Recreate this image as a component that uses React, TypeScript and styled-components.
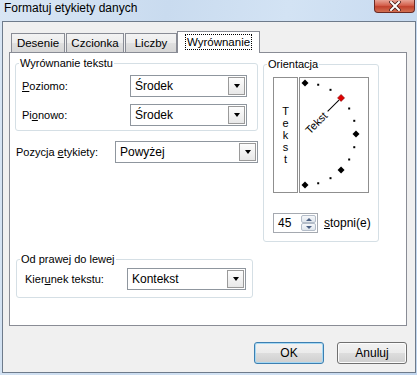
import styled, { createGlobalStyle } from 'styled-components'

const GlobalStyle = createGlobalStyle`
  html, body {
    margin: 0;
    padding: 0;
  }
  body {
    width: 417px;
    height: 375px;
    overflow: hidden;
    font-family: "Liberation Sans", Arial, sans-serif;
    font-size: 11px;
    color: #000;
  }
`

// Window chrome
const Window = styled.div`
  width: 417px;
  height: 375px;
  box-sizing: border-box;
  display: flex;
  flex-direction: column;
  padding: 0 1px 2px 2px;
  background: linear-gradient(100deg, #d9e6f4 0%, #c9dbef 35%, #d3e3f4 60%, #c2d6ee 100%);
`

const TitleBar = styled.div`
  height: 21px;
  display: flex;
  justify-content: space-between;
  align-items: flex-start;
`

const Title = styled.span`
  font-size: 12px;
  line-height: 15px;
  padding: 1px 0 0 2px;
`

const CloseButton = styled.div`
  width: 41px;
  height: 13px;
  margin-right: 1px;
  box-sizing: border-box;
  border: 1px solid #6b2a24;
  border-top: none;
  border-radius: 0 0 4px 4px;
  background: linear-gradient(180deg, #e8a395 0%, #d4604c 45%, #c1412d 55%, #d27052 100%);
  display: flex;
  align-items: center;
  justify-content: center;
`

const Client = styled.div`
  flex: 1;
  background: #f0f0f0;
  border: 1px solid #6e7b8b;
  display: flex;
  flex-direction: column;
  padding: 9px 7px 0 6px;
`

// Tabs
const TabStrip = styled.div`
  display: flex;
  align-items: flex-end;
  height: 22px;
  margin: 0 0 -1px 2px;
  position: relative;
  z-index: 1;
`

const Tab = styled.div<{ $active?: boolean; $width: number }>`
  box-sizing: border-box;
  width: ${(p) => p.$width}px;
  height: ${(p) => (p.$active ? '22px' : '20px')};
  margin: ${(p) => (p.$active ? '0 0 0 -1px' : '0 1px 0 0')};
  padding-top: ${(p) => (p.$active ? '4px' : '3px')};
  text-align: center;
  border: 1px solid #898c95;
  border-bottom: ${(p) => (p.$active ? 'none' : '1px solid #898c95')};
  background: ${(p) =>
    p.$active ? '#fff' : 'linear-gradient(180deg, #f3f3f3 0%, #ececec 50%, #e0e0e0 51%, #d6d6d6 100%)'};
  font-size: 11.5px;
  line-height: 13px;
  white-space: nowrap;
`

const FocusLabel = styled.span`
  outline: 1px dotted #000;
  outline-offset: 1px;
`

const Panel = styled.div`
  width: 398px;
  height: 274px;
  box-sizing: border-box;
  border: 1px solid #898c95;
  background: #fff;
  padding: 3px 0 0 5px;
`

const TopGrid = styled.div`
  display: grid;
  grid-template-columns: 243px 116px;
  column-gap: 5px;
  align-items: start;
`

const LeftColumn = styled.div`
  display: flex;
  flex-direction: column;
`

// Group boxes
const Group = styled.fieldset<{ $width: number }>`
  width: ${(p) => p.$width}px;
  box-sizing: border-box;
  margin: 0;
  padding: 0;
  border: 1px solid #d5dfe5;
  border-radius: 3px;
  min-width: 0;
`

const Legend = styled.legend`
  margin-left: 3px;
  padding: 0 1px;
  font-size: 11px;
  line-height: 14px;
`

const GroupBody = styled.div<{ $pad: string; $gap?: number }>`
  display: flex;
  flex-direction: column;
  gap: ${(p) => p.$gap ?? 0}px;
  padding: ${(p) => p.$pad};
`

const FieldRow = styled.div<{ $label: number }>`
  display: grid;
  grid-template-columns: ${(p) => p.$label}px 1fr;
  align-items: center;
`

const Label = styled.span`
  font-size: 11px;
  white-space: nowrap;
`

const Key = styled.span`
  text-decoration: underline;
`

// Combo box
const Combo = styled.div<{ $width: number }>`
  width: ${(p) => p.$width}px;
  height: 22px;
  box-sizing: border-box;
  border: 1px solid #8f969e;
  background: #fff;
  display: flex;
  align-items: center;
  justify-content: space-between;
  padding: 1px 1px 1px 4px;
  font-size: 12px;
`

const DropButton = styled.div`
  width: 17px;
  height: 18px;
  box-sizing: border-box;
  border: 1px solid #9a9a9a;
  background: linear-gradient(180deg, #fdfdfd 0%, #e8e8e8 100%);
  display: flex;
  align-items: center;
  justify-content: center;
  &::after {
    content: '';
    border-left: 3px solid transparent;
    border-right: 3px solid transparent;
    border-top: 4px solid #000;
  }
`

// Orientation
const DialRow = styled.div`
  display: flex;
  gap: 1px;
`

const VerticalText = styled.div`
  width: 25px;
  height: 116px;
  box-sizing: border-box;
  border: 1px solid #8f8f8f;
  display: flex;
  flex-direction: column;
  align-items: center;
  justify-content: center;
`

const Letter = styled.span`
  display: block;
  height: 12px;
  font-size: 11px;
  line-height: 12px;
`

const DialBox = styled.div`
  width: 70px;
  height: 116px;
  box-sizing: border-box;
  border: 1px solid #8f8f8f;
`

const SpinRow = styled.div`
  display: flex;
  align-items: center;
  gap: 6px;
  margin-top: 20px;
`

const SpinBox = styled.div`
  width: 45px;
  height: 20px;
  box-sizing: border-box;
  border: 1px solid #a5a9b0;
  display: flex;
  align-items: center;
  justify-content: space-between;
  padding: 1px 1px 1px 4px;
  font-size: 12px;
`

const SpinButtons = styled.div`
  display: flex;
  flex-direction: column;
`

const SpinButton = styled.div<{ $up?: boolean }>`
  width: 15px;
  height: 8px;
  box-sizing: border-box;
  border: 1px solid #b3bcc8;
  border-radius: 2px;
  background: linear-gradient(180deg, #f6f8fb 0%, #dfe5ec 100%);
  display: flex;
  align-items: center;
  justify-content: center;
  &::after {
    content: '';
    border-left: 3px solid transparent;
    border-right: 3px solid transparent;
    ${(p) => (p.$up ? 'border-bottom: 3px solid #4a5f82;' : 'border-top: 3px solid #4a5f82;')}
  }
`

const BottomGroupWrap = styled.div`
  margin: 10px 0 0 1px;
`

// Buttons
const ButtonRow = styled.div`
  display: flex;
  justify-content: flex-end;
  gap: 13px;
  width: 398px;
  margin-top: 16px;
`

const Button = styled.div<{ $default?: boolean }>`
  width: 70px;
  height: 22px;
  box-sizing: border-box;
  border: 1px solid ${(p) => (p.$default ? '#3c7fb1' : '#707070')};
  border-radius: 3px;
  box-shadow: ${(p) => (p.$default ? 'inset 0 0 0 1px #a6d8f3' : 'inset 0 0 0 1px #fcfcfc')};
  background: linear-gradient(180deg, #f2f2f2 0%, #ebebeb 50%, #dddddd 51%, #cfcfcf 100%);
  display: flex;
  align-items: center;
  justify-content: center;
  font-size: 12px;
`

const dialPoints = Array.from({ length: 13 }, (_, i) => {
  const deg = 90 - i * 15
  const rad = (deg * Math.PI) / 180
  return { deg, x: 5 + 51 * Math.cos(rad), y: 56 - 51 * Math.sin(rad) }
})

const Dial = () => (
  <svg width="68" height="114" viewBox="0 0 68 114">
    {dialPoints.map((p) =>
      p.deg % 45 === 0 ? (
        <polygon
          key={p.deg}
          points={`${p.x},${p.y - 3.5} ${p.x + 3.5},${p.y} ${p.x},${p.y + 3.5} ${p.x - 3.5},${p.y}`}
          fill={p.deg === 45 ? '#e00000' : '#000'}
          stroke={p.deg === 45 ? '#7a0000' : 'none'}
          strokeWidth="0.6"
        />
      ) : (
        <rect key={p.deg} x={p.x - 1} y={p.y - 1} width="2" height="2" fill="#000" />
      )
    )}
    <g transform="translate(5,56) rotate(-45)">
      <line x1="32" y1="0" x2="48" y2="0" stroke="#000" strokeWidth="1" />
      <text x="3" y="4" fontSize="11" fontFamily="Liberation Sans, Arial, sans-serif">
        Tekst
      </text>
    </g>
  </svg>
)

const CloseGlyph = () => (
  <svg width="12" height="10" viewBox="0 0 12 10">
    <path d="M2 1 L10 9 M10 1 L2 9" stroke="#4a1d18" strokeWidth="3.6" strokeLinecap="square" />
    <path d="M2 1 L10 9 M10 1 L2 9" stroke="#fff" strokeWidth="2" strokeLinecap="square" />
  </svg>
)

const App = () => {
  return (
    <>
      <GlobalStyle />
      <Window>
        <TitleBar>
          <Title>Formatuj etykiety danych</Title>
          <CloseButton>
            <CloseGlyph />
          </CloseButton>
        </TitleBar>
        <Client>
          <TabStrip>
            <Tab $width={54}>Desenie</Tab>
            <Tab $width={58}>Czcionka</Tab>
            <Tab $width={52}>Liczby</Tab>
            <Tab $active $width={83}>
              <FocusLabel>Wyrównanie</FocusLabel>
            </Tab>
          </TabStrip>
          <Panel>
            <TopGrid>
              <LeftColumn>
                <Group $width={243}>
                  <Legend>Wyrównanie tekstu</Legend>
                  <GroupBody $pad="5px 0 4px 6px" $gap={7}>
                    <FieldRow $label={108}>
                      <Label>
                        <Key>P</Key>oziomo:
                      </Label>
                      <Combo $width={117}>
                        Środek
                        <DropButton />
                      </Combo>
                    </FieldRow>
                    <FieldRow $label={108}>
                      <Label>
                        Pi<Key>o</Key>nowo:
                      </Label>
                      <Combo $width={117}>
                        Środek
                        <DropButton />
                      </Combo>
                    </FieldRow>
                  </GroupBody>
                </Group>
                <FieldRow $label={99} style={{ marginTop: 10, paddingLeft: 1 }}>
                  <Label>
                    Pozycja <Key>e</Key>tykiety:
                  </Label>
                  <Combo $width={143}>
                    Powyżej
                    <DropButton />
                  </Combo>
                </FieldRow>
              </LeftColumn>
              <Group $width={116} style={{ marginTop: 1 }}>
                <Legend>Orientacja</Legend>
                <GroupBody $pad="6px 0 8px 9px">
                  <DialRow>
                    <VerticalText>
                      {['T', 'e', 'k', 's', 't'].map((c, i) => (
                        <Letter key={i}>{c}</Letter>
                      ))}
                    </VerticalText>
                    <DialBox>
                      <Dial />
                    </DialBox>
                  </DialRow>
                  <SpinRow>
                    <SpinBox>
                      45
                      <SpinButtons>
                        <SpinButton $up />
                        <SpinButton />
                      </SpinButtons>
                    </SpinBox>
                    <Label style={{ fontSize: 12 }}>
                      <Key>s</Key>topni(e)
                    </Label>
                  </SpinRow>
                </GroupBody>
              </Group>
            </TopGrid>
            <BottomGroupWrap>
              <Group $width={237}>
                <Legend>Od prawej do lewej</Legend>
                <GroupBody $pad="2px 0 7px 8px">
                  <FieldRow $label={102}>
                    <Label>
                      Kier<Key>u</Key>nek tekstu:
                    </Label>
                    <Combo $width={119}>
                      Kontekst
                      <DropButton />
                    </Combo>
                  </FieldRow>
                </GroupBody>
              </Group>
            </BottomGroupWrap>
          </Panel>
          <ButtonRow>
            <Button $default>OK</Button>
            <Button>Anuluj</Button>
          </ButtonRow>
        </Client>
      </Window>
    </>
  )
}

export default App
